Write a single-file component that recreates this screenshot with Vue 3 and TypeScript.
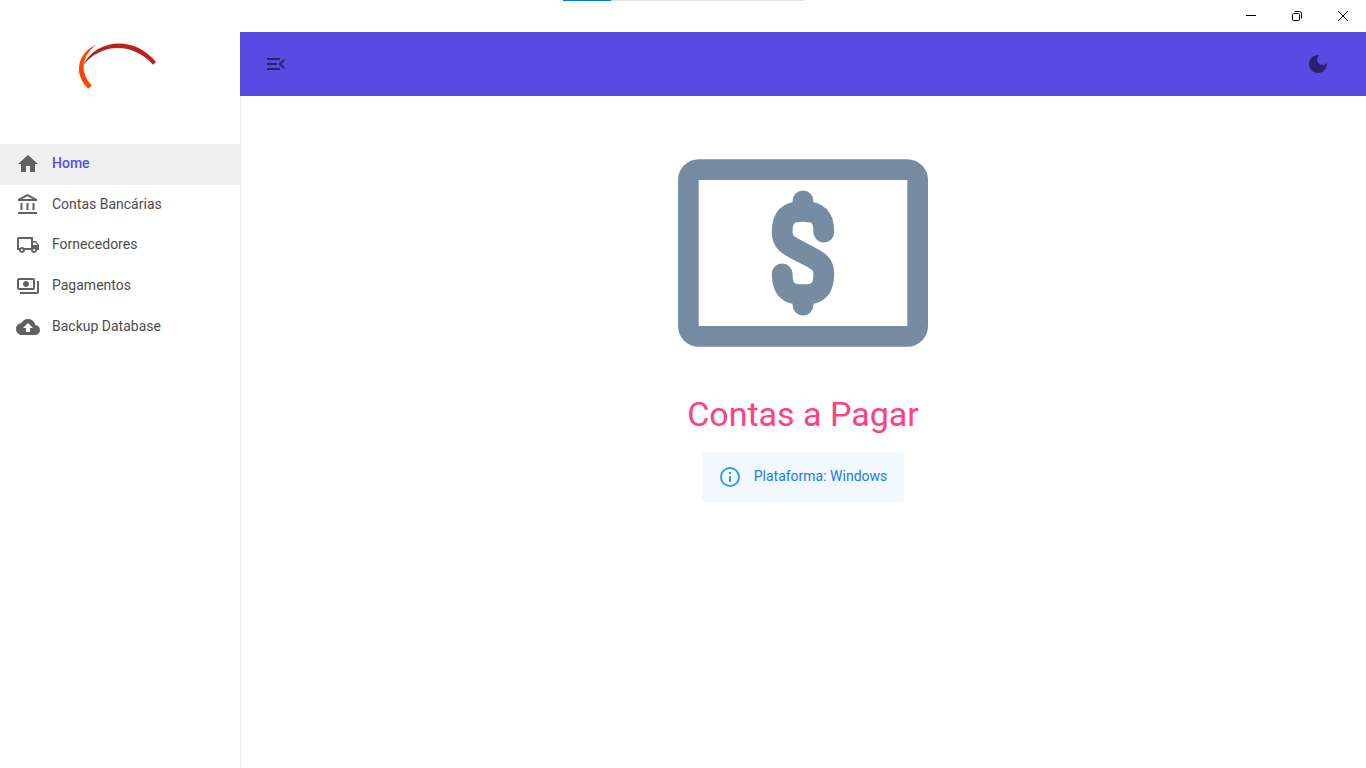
<script setup lang="ts">
import { ref } from 'vue'

interface NavItem {
  label: string
  icon: string
}

const items: NavItem[] = [
  { label: 'Home', icon: 'M10 20v-6h4v6h5v-8h3L12 3 2 12h3v8z' },
  { label: 'Contas Bancárias', icon: 'M6.5 10h-2v7h2v-7zm6 0h-2v7h2v-7zm8.5 9H2v2h19v-2zm-2.5-9h-2v7h2v-7zm-7-6.74L16.71 6H6.29l5.21-2.74m0-2.26L2 6v2h19V6l-9.5-5z' },
  { label: 'Fornecedores', icon: 'M20 8h-3V4H3c-1.1 0-2 .9-2 2v11h2c0 1.66 1.34 3 3 3s3-1.34 3-3h6c0 1.66 1.34 3 3 3s3-1.34 3-3h2v-5l-3-4zm-.5 1.5l1.96 2.5H17V9.5h2.5zM6 18c-.55 0-1-.45-1-1s.45-1 1-1 1 .45 1 1-.45 1-1 1zm2.22-3c-.55-.61-1.33-1-2.22-1s-1.67.39-2.22 1H3V6h12v9H8.22zM18 18c-.55 0-1-.45-1-1s.45-1 1-1 1 .45 1 1-.45 1-1 1z' },
  { label: 'Pagamentos', icon: 'M19 14V6c0-1.1-.9-2-2-2H3c-1.1 0-2 .9-2 2v8c0 1.1.9 2 2 2h14c1.1 0 2-.9 2-2zm-2 0H3V6h14v8zm-7-7c-1.66 0-3 1.34-3 3s1.34 3 3 3 3-1.34 3-3-1.34-3-3-3zm13 0v11c0 1.1-.9 2-2 2H4v-2h17V7h2z' },
  { label: 'Backup Database', icon: 'M19.35 10.04C18.67 6.59 15.64 4 12 4 9.11 4 6.6 5.64 5.35 8.04 2.34 8.36 0 10.91 0 14c0 3.31 2.69 6 6 6h13c2.76 0 5-2.24 5-5 0-2.64-2.05-4.78-4.65-4.96zM14 13v4h-4v-4H7l5-5 5 5h-3z' },
]

const active = ref('Home')
</script>

<template>
  <div class="window">
    <header class="titlebar">
      <div class="loader"><div class="loader-fill"></div></div>
      <button class="win-btn" type="button" aria-label="Minimizar">
        <svg width="12" height="12" viewBox="0 0 12 12"><path d="M1 5.5h10" /></svg>
      </button>
      <button class="win-btn" type="button" aria-label="Restaurar">
        <svg width="12" height="12" viewBox="0 0 12 12"><rect x="1.5" y="3.5" width="7" height="7" rx="1" /><path d="M3.5 1.5h5a2 2 0 0 1 2 2v5" /></svg>
      </button>
      <button class="win-btn" type="button" aria-label="Fechar">
        <svg width="12" height="12" viewBox="0 0 12 12"><path d="M1 1l10 10M11 1L1 11" /></svg>
      </button>
    </header>

    <div class="body">
      <aside class="drawer">
        <div class="brand">
          <svg width="120" height="75" viewBox="0 6 360 225" aria-hidden="true">
            <path d="M52 147Q50 118 70 98L70 106Q56 124 52 147z" fill="#e9a090" opacity=".6" />
            <path d="M68 107C110 23 225 17 288 96L279 104C218 37 125 37 68 107z" fill="#b92020" />
            <path d="M108 46C60 62 34 128 85 176L95 166C62 132 60 80 108 46z" fill="#ff4500" />
          </svg>
        </div>
        <nav class="nav">
          <a
            v-for="item in items"
            :key="item.label"
            href="#"
            class="nav-link"
            :class="{ active: item.label === active }"
            @click.prevent="active = item.label"
          >
            <svg width="24" height="24" viewBox="0 0 24 24" aria-hidden="true"><path :d="item.icon" /></svg>
            <span>{{ item.label }}</span>
          </a>
        </nav>
      </aside>

      <div class="content">
        <div class="appbar">
          <button class="icon-btn" type="button" aria-label="Menu">
            <svg width="24" height="24" viewBox="0 0 24 24"><path d="M3 18h13v-2H3v2zM3 6v2h13V6H3zm0 7h10v-2H3v2zm18 2.59L17.42 12 21 8.41 19.59 7l-5 5 5 5L21 15.59z" /></svg>
          </button>
          <button class="icon-btn" type="button" aria-label="Tema escuro">
            <svg width="24" height="24" viewBox="0 0 24 24"><path d="M12 3c-4.97 0-9 4.03-9 9s4.03 9 9 9 9-4.03 9-9c0-.46-.04-.92-.1-1.36-.98 1.37-2.58 2.26-4.4 2.26-2.98 0-5.4-2.42-5.4-5.4 0-1.81.89-3.42 2.26-4.4-.44-.06-.9-.1-1.36-.1z" /></svg>
          </button>
        </div>

        <main class="main">
          <svg class="hero" width="250" height="250" viewBox="0 0 24 24" aria-hidden="true">
            <rect x="1" y="4" width="22" height="16" rx="1" />
            <path d="M2 5h20v14H2z" class="hole" />
            <path d="M14 10C14 8.4 13.3 8 12 8S10 8.4 10 10C10 11 10.5 11.25 12 12S14 13 14 14C14 15.6 13.3 16 12 16S10 15.6 10 14M12 7v1M12 16v1" />
          </svg>
          <h1>Contas a Pagar</h1>
          <div class="alert" role="status">
            <svg width="24" height="24" viewBox="0 0 24 24" aria-hidden="true"><path d="M11 9h2V7h-2M12 20c-4.41 0-8-3.59-8-8s3.59-8 8-8 8 3.59 8 8-3.59 8-8 8m0-18a10 10 0 1 0 0 20 10 10 0 0 0 0-20m-1 15h2v-6h-2z" /></svg>
            <span>Plataforma: Windows</span>
          </div>
        </main>
      </div>
    </div>
  </div>
</template>

<style>
body {
  margin: 0;
  background: #fff;
}
</style>

<style scoped>
.window {
  min-height: 100vh;
  display: flex;
  flex-direction: column;
  font-family: Roboto, "Liberation Sans", sans-serif;
  font-size: 14px;
  line-height: 20px;
  color: #424242;
}
button {
  border: 0;
  padding: 0;
  background: none;
  display: flex;
  align-items: center;
  justify-content: center;
  cursor: pointer;
}
svg {
  flex: none;
  display: block;
}
.titlebar {
  position: relative;
  height: 32px;
  display: flex;
  justify-content: flex-end;
}
.loader {
  position: absolute;
  top: 0;
  left: 50%;
  width: 241px;
  height: 1px;
  margin-left: -120px;
  background: #e5e5e5;
}
.loader-fill {
  width: 20%;
  height: 100%;
  background: #0078d7;
}
.win-btn {
  width: 46px;
}
.win-btn svg {
  fill: none;
  stroke: #000;
  stroke-width: 1;
}
.body {
  flex: 1;
  display: flex;
}
.drawer {
  width: 240px;
  flex: none;
  box-shadow: 1px 0 0 #ebebeb;
}
.brand {
  height: 112px;
  display: flex;
  justify-content: center;
}
.nav {
  display: grid;
  grid-auto-rows: 1fr;
  min-height: 203px;
}
.nav-link {
  display: flex;
  align-items: center;
  gap: 12px;
  padding: 0 16px;
  color: #4c4c4c;
  text-decoration: none;
}
.nav-link svg {
  fill: #616161;
}
.nav-link span {
  padding-bottom: 2px;
}
.nav-link.active {
  background: #efefef;
  color: #594ae2;
  font-weight: 500;
}
.content {
  flex: 1;
  min-width: 0;
}
.appbar {
  position: relative;
  height: 64px;
  padding: 0 24px 0 12px;
  display: flex;
  align-items: center;
  justify-content: space-between;
  background: #594ae2;
}
.icon-btn {
  width: 48px;
  height: 48px;
}
.icon-btn svg {
  fill: rgba(0, 0, 0, 0.54);
}
.main {
  display: flex;
  flex-direction: column;
  align-items: center;
  padding-top: 32px;
}
.hero {
  fill: none;
  stroke: #768ca3;
  stroke-width: 2;
  stroke-linecap: round;
}
.hero .hole {
  fill: #fff;
  stroke: none;
}
h1 {
  margin: 16px 0;
  padding-bottom: 2px;
  font-size: 34px;
  line-height: 40px;
  font-weight: 400;
  color: #ff4081;
}
.alert {
  display: flex;
  align-items: center;
  gap: 12px;
  padding: 13px 17px 13px 16px;
  border-radius: 4px;
  background: #f1f8fe;
  color: #1f7ae0;
}
.alert svg {
  fill: #2d9cf4;
}
.alert span {
  padding-bottom: 2px;
}
</style>
